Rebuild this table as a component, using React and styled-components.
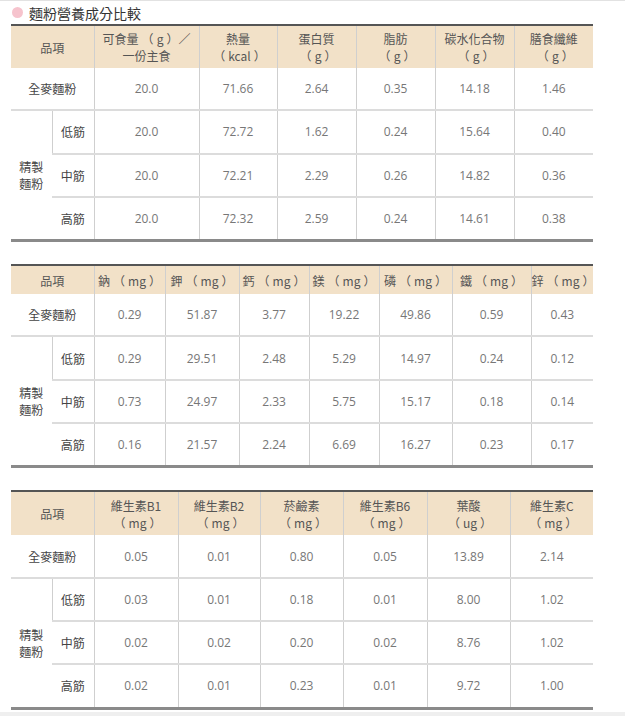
import React from "react";
import styled, { createGlobalStyle } from "styled-components";

const GlobalStyle = createGlobalStyle`
    html, body {
        margin: 0;
        padding: 0;
        background: #efefef;
    }
    body {
        font-family: "Open Sans", "Noto Sans CJK TC", sans-serif;
    }
`;

const Page = styled.div`
    background: #fff;
    height: 712px;
    border-top: 1px solid #e2e2e2;
    box-sizing: border-box;
    padding: 0 32px 0 11px;
`;

const Title = styled.h2`
    display: flex;
    align-items: center;
    margin: 0;
    height: 23px;
    font-family: "Noto Sans CJK TC", sans-serif;
    font-size: 14px;
    font-weight: 400;
    color: #333;
    &::before {
        content: "";
        width: 11px;
        height: 11px;
        border-radius: 50%;
        background: #f6c3cd;
        margin: 0 6px 0 1px;
    }
`;

const Table = styled.table`
    width: 582px;
    table-layout: fixed;
    border-collapse: collapse;
    border-top: 2px solid #555;
    margin-bottom: 22px;
    font-size: 12px;
`;

const HeadCell = styled.th`
    background: #f2e1c8;
    color: #555;
    font-weight: 400;
    font-family: "Noto Sans CJK TC", sans-serif;
    height: ${(p) => p.$h}px;
    padding: 0;
    line-height: 17px;
    text-align: center;
    white-space: nowrap;
    border-left: 1px solid #cfcfcf;
    &:first-child {
        border-left: none;
    }
`;

// loosen the full-width brackets round the units
const Paren = styled.span`
    margin: ${(p) => (p.$open ? "0 3px 0 3px" : "0 0 0 3px")};
`;

const Row = styled.tr`
    border-bottom: 2px solid #dcdcdc;
    &:last-child {
        border-bottom: 3px solid #8a8a8a;
    }
`;

const Cell = styled.td`
    height: 41.3px;
    padding: 0;
    text-align: center;
    color: #777;
    border-left: 1px solid #cfcfcf;
    &:first-child {
        border-left: none;
    }
`;

const NameCell = styled(Cell)`
    color: #444;
    font-family: "Noto Sans CJK TC", sans-serif;
    line-height: 17px;
`;

const tables = [
    {
        headH: 42,
        cols: [105, 78, 79, 79, 79, 79],
        heads: [
            ["可食量（g）／", "一份主食"],
            ["熱量", "（kcal）"],
            ["蛋白質", "（g）"],
            ["脂肪", "（g）"],
            ["碳水化合物", "（g）"],
            ["膳食纖維", "（g）"],
        ],
        rows: [
            ["20.0", "71.66", "2.64", "0.35", "14.18", "1.46"],
            ["20.0", "72.72", "1.62", "0.24", "15.64", "0.40"],
            ["20.0", "72.21", "2.29", "0.26", "14.82", "0.36"],
            ["20.0", "72.32", "2.59", "0.24", "14.61", "0.38"],
        ],
    },
    {
        headH: 28,
        cols: [71, 74, 70, 70, 73, 79, 62],
        heads: [
            ["鈉（mg）"],
            ["鉀（mg）"],
            ["鈣（mg）"],
            ["鎂（mg）"],
            ["磷（mg）"],
            ["鐵（mg）"],
            ["鋅（mg）"],
        ],
        rows: [
            ["0.29", "51.87", "3.77", "19.22", "49.86", "0.59", "0.43"],
            ["0.29", "29.51", "2.48", "5.29", "14.97", "0.24", "0.12"],
            ["0.73", "24.97", "2.33", "5.75", "15.17", "0.18", "0.14"],
            ["0.16", "21.57", "2.24", "6.69", "16.27", "0.23", "0.17"],
        ],
    },
    {
        headH: 43,
        cols: [84, 82, 83, 84, 83, 83],
        heads: [
            ["維生素B1", "（mg）"],
            ["維生素B2", "（mg）"],
            ["菸鹼素", "（mg）"],
            ["維生素B6", "（mg）"],
            ["葉酸", "（ug）"],
            ["維生素C", "（mg）"],
        ],
        rows: [
            ["0.05", "0.01", "0.80", "0.05", "13.89", "2.14"],
            ["0.03", "0.01", "0.18", "0.01", "8.00", "1.02"],
            ["0.02", "0.02", "0.20", "0.02", "8.76", "1.02"],
            ["0.02", "0.01", "0.23", "0.01", "9.72", "1.00"],
        ],
    },
];

const subNames = ["低筋", "中筋", "高筋"];

const withParens = (text) =>
    text.split(/([（）])/).map((part, i) =>
        part === "（" || part === "）" ? (
            <Paren key={i} $open={part === "（"}>
                {part}
            </Paren>
        ) : (
            part
        )
    );

const NutritionTable = ({ data }) => (
    <Table>
        <colgroup>
            <col style={{ width: 41 }} />
            <col style={{ width: 42 }} />
            {data.cols.map((w, i) => (
                <col key={i} style={{ width: w }} />
            ))}
        </colgroup>
        <thead>
            <tr>
                <HeadCell colSpan={2} $h={data.headH}>品項</HeadCell>
                {data.heads.map((h, i) => (
                    <HeadCell key={i} $h={data.headH}>
                        {h.map((line, j) => (
                            <div key={j}>{withParens(line)}</div>
                        ))}
                    </HeadCell>
                ))}
            </tr>
        </thead>
        <tbody>
            {data.rows.map((r, i) => (
                <Row key={i}>
                    {i === 0 && <NameCell colSpan={2}>全麥麵粉</NameCell>}
                    {i === 1 && (
                        <NameCell rowSpan={3}>
                            精製
                            <br />
                            麵粉
                        </NameCell>
                    )}
                    {i > 0 && <NameCell>{subNames[i - 1]}</NameCell>}
                    {r.map((v, j) => (
                        <Cell key={j}>{v}</Cell>
                    ))}
                </Row>
            ))}
        </tbody>
    </Table>
);

const App = () => {
    return (
        <>
            <GlobalStyle />
            <Page lang="zh-Hant-TW">
                <Title>麵粉營養成分比較</Title>
                {tables.map((t, i) => (
                    <NutritionTable key={i} data={t} />
                ))}
            </Page>
        </>
    );
};

export default App;
